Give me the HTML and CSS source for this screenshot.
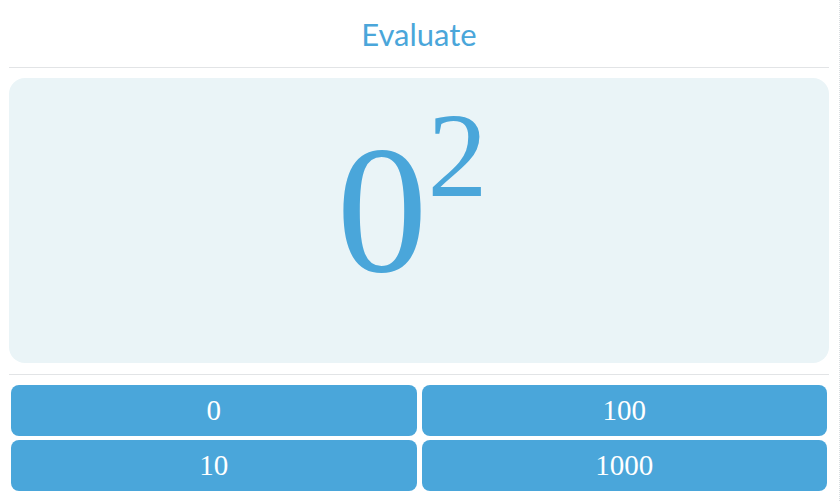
FILE: index.html
```html
<!DOCTYPE html>
<html lang="en">
  <head>
    <meta charset="UTF-8" />
    <title>Evaluate</title>
    <link rel="stylesheet" href="styles.css">
  </head>
  <body>
    <div class="app">
      <!-- Title bar -->
      <div class="header">
        <h1 class="title">Evaluate</h1>
      </div>
      <!-- Expression to evaluate -->
      <div class="question">
        <div class="expr">0<sup>2</sup></div>
      </div>
      <div class="divider"></div>
      <!-- Answer choices -->
      <div class="answers">
        <button class="answer">0</button>
        <button class="answer">100</button>
        <button class="answer">10</button>
        <button class="answer">1000</button>
      </div>
    </div>
  </body>
</html>
```

FILE: styles.css
```css
/* Reset & Base */
* {
  box-sizing: border-box;
  margin: 0;
  padding: 0;
}
html,
body {
  height: 100%;
  background: #fff;
  overflow: hidden;
}
body {
  border-right: 1px dotted #d8dde0;
  width: 840px;
}
.app {
  width: 820px;
  margin-left: 9px;
}
/* Header */
.header {
  height: 68px;
  border-bottom: 1px solid #e2e4e6;
  display: flex;
  justify-content: center;
  padding-top: 14px;
}
.title {
  font-family: Lato, "Noto Sans", sans-serif;
  font-weight: normal;
  font-size: 31px;
  line-height: 40px;
  color: #4aa6da;
}
/* Question panel */
.question {
  margin-top: 10px;
  height: 285px;
  background: #eaf4f7;
  border-radius: 16px;
  display: flex;
  justify-content: center;
  align-items: center;
}
.expr {
  font-family: "Liberation Serif", "Times New Roman", serif;
  font-size: 182px;
  line-height: 1;
  color: #4aa6da;
  margin-bottom: 22px;
  margin-right: 14px;
}
.expr sup {
  font-size: 120px;
  vertical-align: 75px;
  line-height: 0;
}
.divider {
  margin-top: 11px;
  border-top: 1px solid #e2e4e6;
}
/* Answer buttons */
.answers {
  margin-top: 10px;
  padding: 0 2px;
  display: grid;
  grid-template-columns: 1fr 1fr;
  grid-auto-rows: 51px;
  column-gap: 5px;
  row-gap: 4px;
}
.answer {
  background: #4aa6da;
  border: none;
  border-radius: 8px;
  color: #fff;
  font-family: "Liberation Serif", "Times New Roman", serif;
  font-size: 29px;
  cursor: pointer;
}
```
